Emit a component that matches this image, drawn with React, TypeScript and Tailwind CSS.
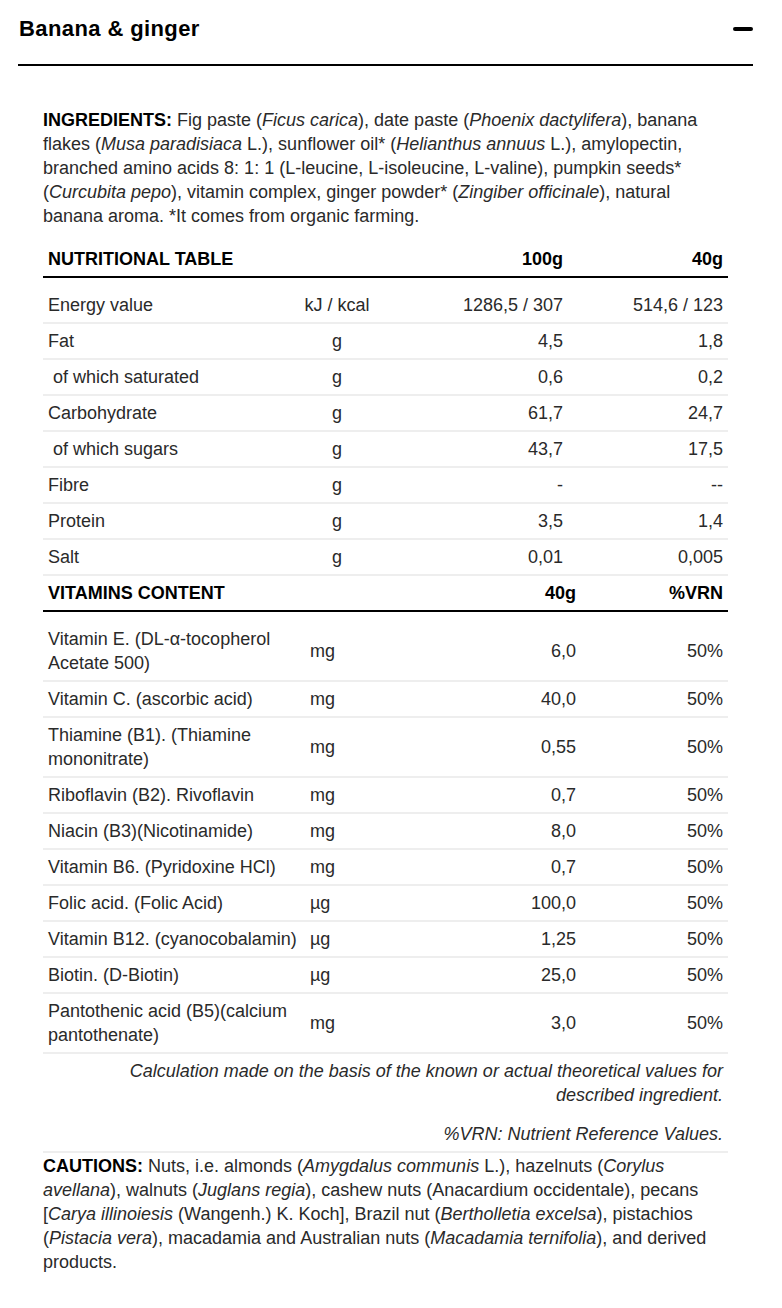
import React from "react";

const nutri: [string, string, string, string][] = [
  ["Energy value", "kJ / kcal", "1286,5 / 307", "514,6 / 123"],
  ["Fat", "g", "4,5", "1,8"],
  ["\u00a0of which saturated", "g", "0,6", "0,2"],
  ["Carbohydrate", "g", "61,7", "24,7"],
  ["\u00a0of which sugars", "g", "43,7", "17,5"],
  ["Fibre", "g", "-", "--"],
  ["Protein", "g", "3,5", "1,4"],
  ["Salt", "g", "0,01", "0,005"],
];

const vits: [React.ReactNode, string, string, string][] = [
  [<>Vitamin E. (DL-α-tocopherol<br />Acetate 500)</>, "mg", "6,0", "50%"],
  ["Vitamin C. (ascorbic acid)", "mg", "40,0", "50%"],
  [<>Thiamine (B1). (Thiamine<br />mononitrate)</>, "mg", "0,55", "50%"],
  ["Riboflavin (B2). Rivoflavin", "mg", "0,7", "50%"],
  ["Niacin (B3)(Nicotinamide)", "mg", "8,0", "50%"],
  ["Vitamin B6. (Pyridoxine HCl)", "mg", "0,7", "50%"],
  ["Folic acid. (Folic Acid)", "µg", "100,0", "50%"],
  ["Vitamin B12. (cyanocobalamin)", "µg", "1,25", "50%"],
  ["Biotin. (D-Biotin)", "µg", "25,0", "50%"],
  [<>Pantothenic acid (B5)(calcium<br />pantothenate)</>, "mg", "3,0", "50%"],
];

const nGrid = "grid grid-cols-[237px_114px_174px_160px]";
const vGrid = "grid grid-cols-[262px_115px_161px_147px]";

export default function App() {
  return (
    <div
      className="w-[782px] min-h-[1308px] bg-white text-[#2a2a2a] pl-[18px] pr-[29px]"
      style={{ fontFamily: '"Liberation Sans", Arial, sans-serif' }}
    >
      <div className="flex items-center justify-between h-[66px] pl-px border-b-2 border-black">
        <h2 className="text-[22px] font-bold text-black pb-[8px] tracking-[0.4px]">Banana &amp; ginger</h2>
        <div className="w-[20px] h-[4px] rounded-[2px] bg-black mb-[6px]" />
      </div>

      <div className="px-[25px] text-[18px] leading-[24px]">
        <p className="mt-[42px] mb-[14px]">
          <b className="text-black">INGREDIENTS:</b> Fig paste (<i>Ficus carica</i>), date paste (
          <i>Phoenix dactylifera</i>), banana flakes (<i>Musa paradisiaca</i> L.), sunflower oil* (
          <i>Helianthus annuus</i> L.), amylopectin, branched amino acids 8: 1: 1 (L-leucine,
          L-isoleucine, L-valine), pumpkin seeds* (<i>Curcubita pepo</i>), vitamin complex, ginger
          powder* (<i>Zingiber officinale</i>), natural banana aroma. *It comes from organic farming.
        </p>

        {/* Nutritional table */}
        <div className={`${nGrid} border-b-2 border-black font-bold text-black`}>
          <div className="p-[5px]">NUTRITIONAL TABLE</div>
          <div className="p-[5px]" />
          <div className="p-[5px] text-right">100g</div>
          <div className="p-[5px] text-right">40g</div>
        </div>
        <div className="h-[10px]" />
        {nutri.map((r, i) => (
          <div key={i} className={`${nGrid} border-b-2 border-[#eeeeee]`}>
            <div className="p-[5px] whitespace-pre">{r[0]}</div>
            <div className="p-[5px] text-center">{r[1]}</div>
            <div className="p-[5px] text-right">{r[2]}</div>
            <div className="p-[5px] text-right">{r[3]}</div>
          </div>
        ))}

        {/* Vitamins */}
        <div className={`${vGrid} border-b-2 border-black font-bold text-black`}>
          <div className="p-[5px]">VITAMINS CONTENT</div>
          <div className="p-[5px]" />
          <div className="p-[5px] text-right">40g</div>
          <div className="p-[5px] text-right">%VRN</div>
        </div>
        <div className="h-[10px]" />
        {vits.map((r, i) => (
          <div key={i} className={`${vGrid} items-center border-b-2 border-[#eeeeee]`}>
            <div className="p-[5px]">{r[0]}</div>
            <div className="p-[5px]">{r[1]}</div>
            <div className="p-[5px] text-right">{r[2]}</div>
            <div className="p-[5px] text-right">{r[3]}</div>
          </div>
        ))}

        <div className="border-b-2 border-[#eeeeee] italic text-right pt-[5px] pb-[5px] pr-[5px] pl-[80px]">
          <p className="mb-[15px]">
            Calculation made on the basis of the known or actual theoretical values for described
            ingredient.
          </p>
          <p>%VRN: Nutrient Reference Values.</p>
        </div>

        <p className="pt-px">
          <b className="text-black">CAUTIONS:</b> Nuts, i.e. almonds (<i>Amygdalus communis</i> L.),
          hazelnuts (<i>Corylus avellana</i>), walnuts (<i>Juglans regia</i>), cashew nuts (Anacardium
          occidentale), pecans [<i>Carya illinoiesis</i> (Wangenh.) K. Koch], Brazil nut (
          <i>Bertholletia excelsa</i>), pistachios (<i>Pistacia vera</i>), macadamia and Australian
          nuts (<i>Macadamia ternifolia</i>), and derived products.
        </p>
      </div>
    </div>
  );
}
